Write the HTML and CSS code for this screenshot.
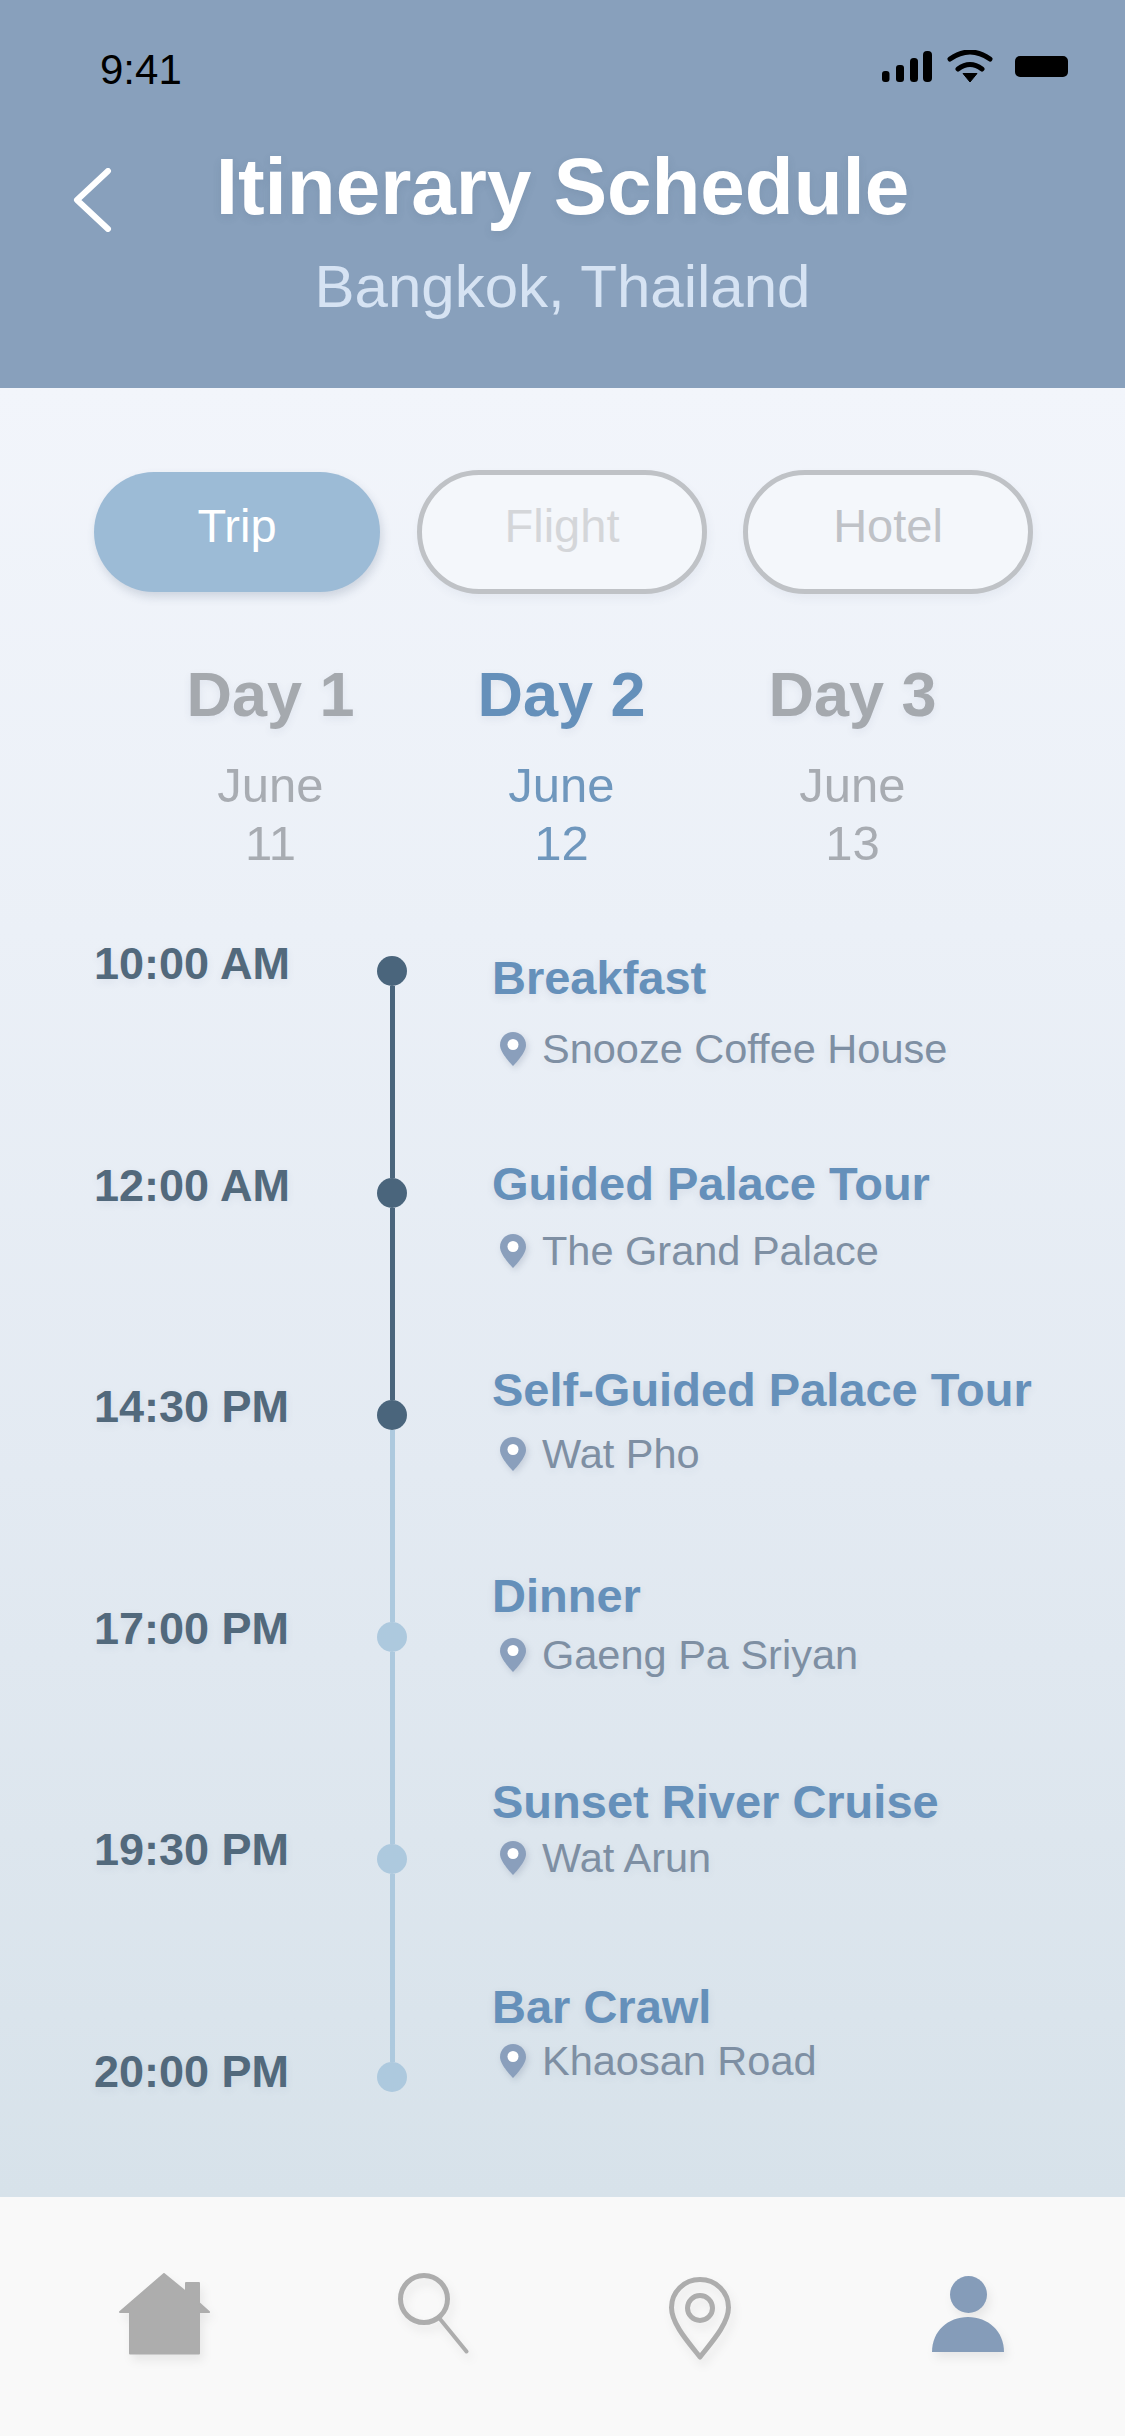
FILE: index.html
```html
<!DOCTYPE html>
<html lang="en">
<head>
<meta charset="utf-8">
<title>Itinerary Schedule</title>
<link rel="stylesheet" href="styles.css">
</head>
<body>
<svg class="defs" width="0" height="0" aria-hidden="true">
  <symbol id="pin" viewBox="0 0 26 34">
    <path d="M13 0C5.800 0 0 5.800 0 13c0 8 13 21 13 21s13-13 13-21C26 5.800 20.200 0 13 0z" fill="#8a9fbc"/>
    <circle cx="13" cy="12.500" r="5.500" fill="#fff"/>
  </symbol>
</svg>
<div class="app">
  <header class="header">
    <div class="status">
      <span class="clock">9:41</span>
      <svg class="status-icons" viewBox="0 0 186 32">
        <rect x="0" y="21" width="7.500" height="11" rx="3"/>
        <rect x="14" y="15" width="8" height="17" rx="3"/>
        <rect x="28" y="8" width="8" height="24" rx="3.500"/>
        <rect x="41" y="1" width="9" height="31" rx="4"/>
        <path d="M68 9Q88-5 108 9M76 19Q88 10 100 19" fill="none" stroke="#000" stroke-width="5" stroke-linecap="round"/>
        <path d="M81 23.500H95L88 32z" stroke="#000" stroke-linejoin="round"/>
        <rect x="133" y="6" width="53" height="21" rx="5"/>
      </svg>
    </div>
    <div class="title-row">
      <svg class="back" viewBox="0 0 40 64"><path d="M35 3L4 32L35 61" fill="none" stroke="#fff" stroke-width="6" stroke-linecap="round" stroke-linejoin="round"/></svg>
      <h1 class="title">Itinerary Schedule</h1>
    </div>
    <p class="subtitle">Bangkok, Thailand</p>
  </header>

  <main class="main">
    <div class="tabs">
      <div class="tab tab-trip">Trip</div>
      <div class="tab tab-outline tab-flight">Flight</div>
      <div class="tab tab-outline tab-hotel">Hotel</div>
    </div>

    <div class="days">
      <div class="day"><div class="day-name">Day 1</div><div class="day-date">June</div><div class="day-date">11</div></div>
      <div class="day day-active"><div class="day-name">Day 2</div><div class="day-date">June</div><div class="day-date">12</div></div>
      <div class="day"><div class="day-name">Day 3</div><div class="day-date">June</div><div class="day-date">13</div></div>
    </div>

    <div class="timeline">
      <div class="times">
        <div class="time">10:00 AM</div>
        <div class="time">12:00 AM</div>
        <div class="time">14:30 PM</div>
        <div class="time">17:00 PM</div>
        <div class="time">19:30 PM</div>
        <div class="time">20:00 PM</div>
      </div>
      <div class="rail">
        <span class="dot dot-done"></span><span class="seg seg-done"></span>
        <span class="dot dot-done"></span><span class="seg seg-done"></span>
        <span class="dot dot-done"></span><span class="seg"></span>
        <span class="dot"></span><span class="seg"></span>
        <span class="dot"></span><span class="seg seg-last"></span>
        <span class="dot"></span>
      </div>
      <div class="events">
        <div class="event"><div class="event-title">Breakfast</div><div class="place"><svg class="pin"><use href="#pin"/></svg><span>Snooze Coffee House</span></div></div>
        <div class="event"><div class="event-title">Guided Palace Tour</div><div class="place"><svg class="pin"><use href="#pin"/></svg><span>The Grand Palace</span></div></div>
        <div class="event"><div class="event-title">Self-Guided Palace Tour</div><div class="place"><svg class="pin"><use href="#pin"/></svg><span>Wat Pho</span></div></div>
        <div class="event"><div class="event-title">Dinner</div><div class="place"><svg class="pin"><use href="#pin"/></svg><span>Gaeng Pa Sriyan</span></div></div>
        <div class="event"><div class="event-title">Sunset River Cruise</div><div class="place"><svg class="pin"><use href="#pin"/></svg><span>Wat Arun</span></div></div>
        <div class="event"><div class="event-title">Bar Crawl</div><div class="place"><svg class="pin"><use href="#pin"/></svg><span>Khaosan Road</span></div></div>
      </div>
    </div>
  </main>

  <nav class="nav">
    <div class="nav-item"><svg class="nav-icon" viewBox="0 0 100 100"><path d="M50 8L72 26V17H85V37L95 46H85V87.500H16V46H6z" fill="#adadad" stroke="#adadad" stroke-width="2" stroke-linejoin="round"/></svg></div>
    <div class="nav-item"><svg class="nav-icon" viewBox="0 0 100 100"><circle cx="42" cy="33" r="23.500" fill="none" stroke="#adadad" stroke-width="5"/><path d="M58 53L84.500 85.500" fill="none" stroke="#adadad" stroke-width="4" stroke-linecap="round"/></svg></div>
    <div class="nav-item"><svg class="nav-icon" viewBox="0 0 100 100"><path d="M50 13.500C34 13.500 21.500 26 21.500 41.500C21.500 58 39 77 50 91C61 77 78.500 58 78.500 41.500C78.500 26 66 13.500 50 13.500z" fill="none" stroke="#adadad" stroke-width="5" stroke-linejoin="round"/><circle cx="50" cy="42" r="12.500" fill="none" stroke="#adadad" stroke-width="5"/></svg></div>
    <div class="nav-item"><svg class="nav-icon" viewBox="0 0 100 100"><circle cx="50.500" cy="28.500" r="18.500" fill="#859cb9"/><path d="M14 86C14 65 30 51 50 51C70 51 86 65 86 86z" fill="#859cb9"/></svg></div>
  </nav>
</div>
</body>
</html>
```
FILE: styles.css
```css
* { box-sizing: border-box; }
html, body { margin: 0; padding: 0; }
body { font-family: "Liberation Sans", Arial, sans-serif; background: #f9f9f9; }
.defs { position: absolute; }

.app { width: 1125px; height: 2436px; display: flex; flex-direction: column; overflow: hidden; }

/* Header */
.header { height: 388px; flex: none; background: #88a0bc; }
.status { height: 92px; padding: 47px 57px 0 100px; display: flex; justify-content: space-between; align-items: flex-start; }
.clock { font-size: 42px; line-height: 46px; color: #000; }
.status-icons { width: 186px; height: 32px; margin-top: 3px; fill: #000; }
.title-row { margin-top: 49px; display: grid; grid-template-columns: 1fr auto 1fr; }
.back { width: 40px; height: 64px; margin: 27px 0 0 73px; }
.title { grid-column: 2; margin: 0; font-size: 80px; line-height: 92px; font-weight: 700; color: #fff; text-shadow: 0 3px 10px rgba(50, 70, 95, .12); }
.subtitle { margin: 19px 0 0; text-align: center; font-size: 60px; line-height: 70px; color: #d6e3f3; }

/* Main */
.main { flex: 1; min-height: 0; padding-top: 82px; background: linear-gradient(180deg, #f2f5fb 0%, #ebf0f7 30%, #e3eaf2 60%, #d7e2ea 100%); }

.tabs { display: flex; align-items: center; gap: 36px; padding-left: 94px; }
.tab { display: flex; justify-content: center; align-items: center; padding-bottom: 14px; border-radius: 62px; font-size: 47px; }
.tab-trip { width: 286px; height: 120px; margin-right: 1px; background: #9cbbd6; color: #fff; box-shadow: 2px 5px 10px rgba(70, 90, 120, .2); }
.tab-outline { width: 290px; height: 124px; border: 5px solid #bfc2c6; background: #f4f7fb; box-shadow: 2px 5px 10px rgba(70, 90, 120, .06); }
.tab-flight { color: #d4d6d9; }
.tab-hotel { color: #bfc2c7; }

.days { margin: 64px 0 0 125px; display: grid; grid-template-columns: repeat(3, 291px); text-align: center; }
.day-name { margin-bottom: 26px; font-size: 63px; line-height: 72px; font-weight: 700; color: #a5a9ae; text-shadow: 0 3px 8px rgba(60, 80, 110, .08); }
.day-date { font-size: 49px; line-height: 58px; color: #a8acb2; }
.day-active .day-name { color: #6590ba; }
.day-active .day-date { color: #6f97bd; }

/* Timeline */
.timeline { margin-top: 67px; padding-left: 94px; display: grid; grid-template-columns: 283px 30px 1fr; }
.times { display: flex; flex-direction: column; gap: 171.500px; }
.time { font-size: 45px; line-height: 50px; font-weight: 700; color: #52697c; text-shadow: 0 3px 8px rgba(60, 80, 110, .08); white-space: nowrap; }
.rail { margin-top: 17px; display: flex; flex-direction: column; align-items: center; }
.dot { width: 30px; height: 30px; flex: none; border-radius: 50%; background: #adc9de; }
.dot-done { background: #4a657c; }
.seg { width: 5px; height: 192px; flex: none; background: #adc9de; }
.seg-done { background: #4a657c; }
.seg-last { height: 188px; }

.events { margin: 13px 0 0 85px; }
.event { height: 205.900px; }
.event-title { font-size: 47px; line-height: 52px; font-weight: 700; color: #6590ba; text-shadow: 0 3px 8px rgba(60, 80, 110, .1); white-space: nowrap; }
.place { display: flex; align-items: center; gap: 16px; padding-left: 8px; font-size: 41.500px; line-height: 46px; color: #7e8fa3; text-shadow: 0 3px 8px rgba(60, 80, 110, .07); white-space: nowrap; }
.pin { width: 26px; height: 34px; flex: none; filter: drop-shadow(2px 3px 3px rgba(60, 80, 110, .18)); }
.event:nth-child(1) .place { margin-top: 22px; }
.event:nth-child(2) .place { margin-top: 18px; }
.event:nth-child(3) .place { margin-top: 15px; }
.event:nth-child(4) .place { margin-top: 10px; }
.event:nth-child(5) .place { margin-top: 7px; }
.event:nth-child(6) .place { margin-top: 5px; }

/* Bottom nav */
.nav { height: 239px; flex: none; padding: 69px 0 0 30px; background: #f9f9f9; display: grid; grid-template-columns: repeat(4, 268px); align-items: start; }
.nav-item { display: flex; justify-content: center; }
.nav-icon { width: 100px; height: 100px; filter: drop-shadow(3px 6px 5px rgba(0, 0, 0, .07)); }
```
